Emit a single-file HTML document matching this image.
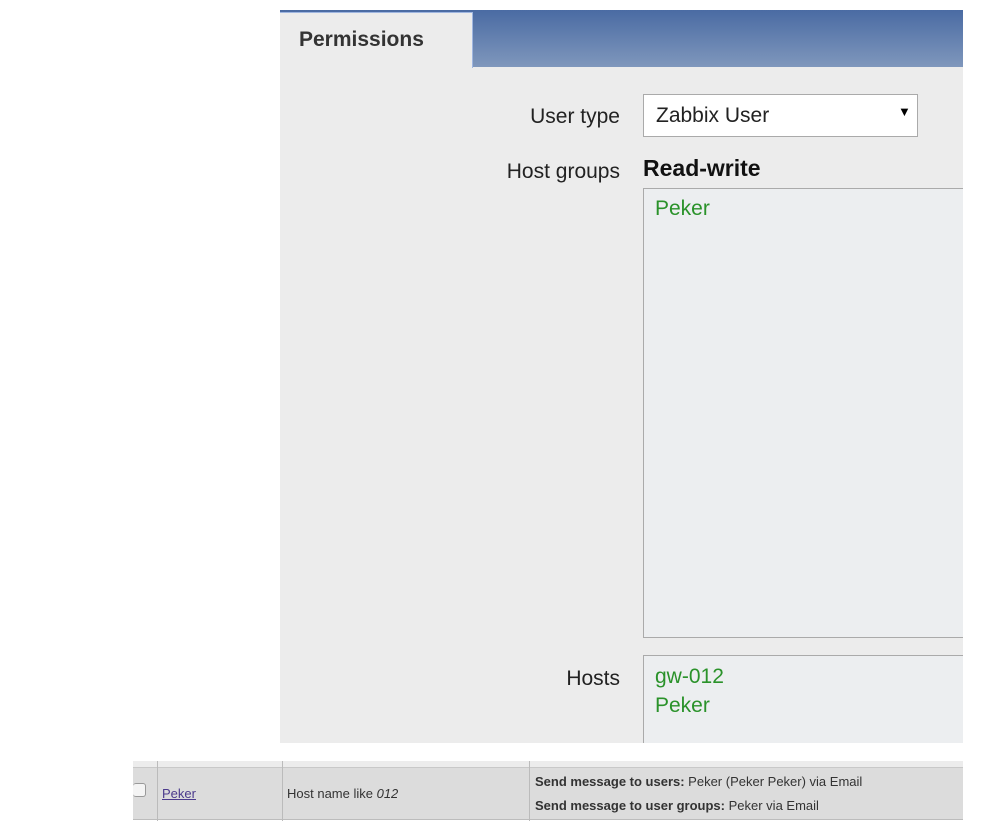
<!DOCTYPE html><html><head><style>
body{margin:0;width:992px;height:832px;background:#fff;position:relative;font-family:"Liberation Sans",sans-serif;overflow:hidden}
.a{position:absolute}
</style></head><body>
<div class="a" style="left:280px;top:10px;width:683px;height:733px;background:#ececec;overflow:hidden">
<div class="a" style="left:0;top:0;width:683px;height:57px;background:linear-gradient(#4a6ba3,#7f97bc)"></div>
<div class="a" style="left:0;top:2px;width:192px;height:55px;background:#ececec;border:1px solid #9fb6e0;border-bottom:none;border-left:none"></div>
<div class="a" style="left:363px;top:84px;width:273px;height:41px;background:#fff;border:1px solid #aaa"></div>
<div class="a" style="left:363px;top:178px;width:340px;height:448px;background:#eceef0;border:1px solid #aaa"></div>
<div class="a" style="left:363px;top:645px;width:340px;height:100px;background:#eceef0;border:1px solid #aaa"></div>
</div>
<div class="a" style="left:299px;top:28px;font-size:21px;font-weight:bold;color:#333">Permissions</div>
<div class="a" style="left:440px;top:105px;width:180px;text-align:right;font-size:21px;color:#222">User type</div>
<div class="a" style="left:656px;top:104px;font-size:21px;color:#222">Zabbix User</div>
<div class="a" style="left:898px;top:104px;font-size:13px;color:#000">▼</div>
<div class="a" style="left:440px;top:160px;width:180px;text-align:right;font-size:21px;color:#222">Host groups</div>
<div class="a" style="left:643px;top:155px;font-size:23px;font-weight:bold;color:#111">Read-write</div>
<div class="a" style="left:655px;top:197px;font-size:21px;color:#2a922a">Peker</div>
<div class="a" style="left:440px;top:667px;width:180px;text-align:right;font-size:21px;color:#222">Hosts</div>
<div class="a" style="left:655px;top:662px;font-size:21px;line-height:29px;color:#2a922a">gw-012<br>Peker</div>
<div class="a" style="left:133px;top:761px;width:830px;height:6px;background:#ececec"></div>
<div class="a" style="left:133px;top:767px;width:830px;height:51px;background:#dcdcdc;border-top:1px solid #c8c8c8;border-bottom:1px solid #bcbcbc"></div>
<div class="a" style="left:157px;top:761px;width:1px;height:60px;background:#bbb"></div>
<div class="a" style="left:282px;top:761px;width:1px;height:60px;background:#bbb"></div>
<div class="a" style="left:529px;top:761px;width:1px;height:60px;background:#bbb"></div>
<div class="a" style="left:133px;top:783px;width:12px;height:12px;background:#f4f4f4;border:1px solid #999;border-radius:3px;border-left:none"></div>
<div class="a" style="left:162px;top:786px;font-size:13px;color:#4b3a8c;text-decoration:underline">Peker</div>
<div class="a" style="left:287px;top:786px;font-size:13px;color:#333">Host name like <i>012</i></div>
<div class="a" style="left:535px;top:770px;font-size:13px;line-height:24px;color:#333"><b>Send message to users:</b> Peker (Peker Peker) via Email<br><b>Send message to user groups:</b> Peker via Email</div>
</body></html>
